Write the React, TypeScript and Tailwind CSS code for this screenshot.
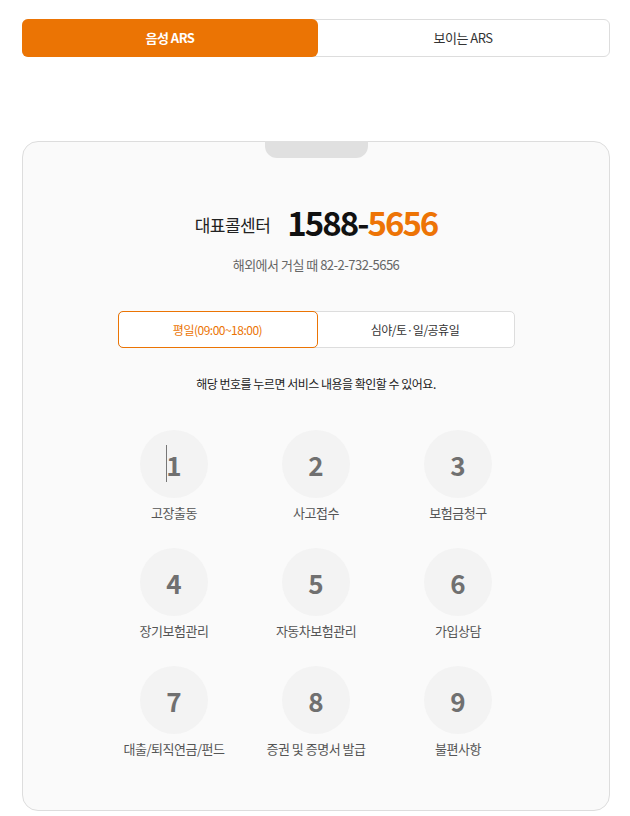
import React from "react";

const items = [
  { n: "1", label: "고장출동" },
  { n: "2", label: "사고접수" },
  { n: "3", label: "보험금청구" },
  { n: "4", label: "장기보험관리" },
  { n: "5", label: "자동차보험관리" },
  { n: "6", label: "가입상담" },
  { n: "7", label: "대출/퇴직연금/펀드" },
  { n: "8", label: "증권 및 증명서 발급" },
  { n: "9", label: "불편사항" },
];

export default function App() {
  return (
    <div
      className="w-[630px] min-h-[816px] bg-white pl-[22px] pr-[20px] pt-[19px]"
      style={{ fontFamily: '"Noto Sans CJK KR", "Noto Sans", sans-serif' }}
    >
      <div className="flex h-[38px] rounded-[6px] border border-[#dddddd] bg-white">
        <div className="-m-px flex w-[296px] items-center justify-center rounded-[6px] bg-[#eb7404] text-[13px] font-bold tracking-[-0.5px] text-white">
          음성 ARS
        </div>
        <div className="flex flex-1 items-center justify-center text-[13px] tracking-[-0.5px] text-[#333333]">
          보이는 ARS
        </div>
      </div>

      <div className="relative mt-[84px] rounded-[16px] border border-[#dddddd] bg-[#fafafa] pb-[52px] pt-[61px]">
        <div className="absolute left-[242px] top-[-1px] h-[17px] w-[103px] rounded-b-[12px] bg-[#e0e0e0]" />

        <div className="flex h-[40px] items-center justify-center">
          <span className="mt-[4px] text-[17px] tracking-[-0.5px] text-[#222222]">대표콜센터</span>
          <span className="ml-[17px] text-[33px] font-bold tracking-[-2px] text-[#111111]">
            1588-<span className="text-[#ed7406]">5656</span>
          </span>
        </div>

        <div className="mt-[12px] text-center text-[13px] leading-[20px] tracking-[-0.5px] text-[#666666]">
          해외에서 거실 때 82-2-732-5656
        </div>

        <div className="mx-auto mt-[36px] flex h-[37px] w-[397px] rounded-[5px] border border-[#dddddd] bg-white">
          <div className="-m-px flex w-[200px] items-center justify-center rounded-[5px] border border-[#eb7404] text-[12px] tracking-[-0.5px] text-[#eb7404]">
            평일(09:00~18:00)
          </div>
          <div className="flex flex-1 items-center justify-center text-[12px] tracking-[-0.5px] text-[#333333]">
            심야/토·일/공휴일
          </div>
        </div>

        <div className="mt-[27px] text-center text-[12px] leading-[18px] tracking-[-0.5px] text-[#222222]">
          해당 번호를 누르면 서비스 내용을 확인할 수 있어요.
        </div>

        <div className="mx-auto mt-[37px] grid w-[426px] grid-cols-3 gap-y-[26px]">
          {items.map((it) => (
            <div key={it.n} className="flex flex-col items-center">
              <div className="relative flex h-[68px] w-[68px] items-center justify-center rounded-full bg-[#f3f3f3] text-[26px] font-bold text-[#707070]">
                {it.n}
                {it.n === "1" && (
                  <span className="absolute left-[26px] top-[15px] h-[37px] w-px bg-[#777777]" />
                )}
              </div>
              <div className="mt-[6px] text-[13px] leading-[18px] tracking-[-0.5px] text-[#555555]">
                {it.label}
              </div>
            </div>
          ))}
        </div>
      </div>
    </div>
  );
}
